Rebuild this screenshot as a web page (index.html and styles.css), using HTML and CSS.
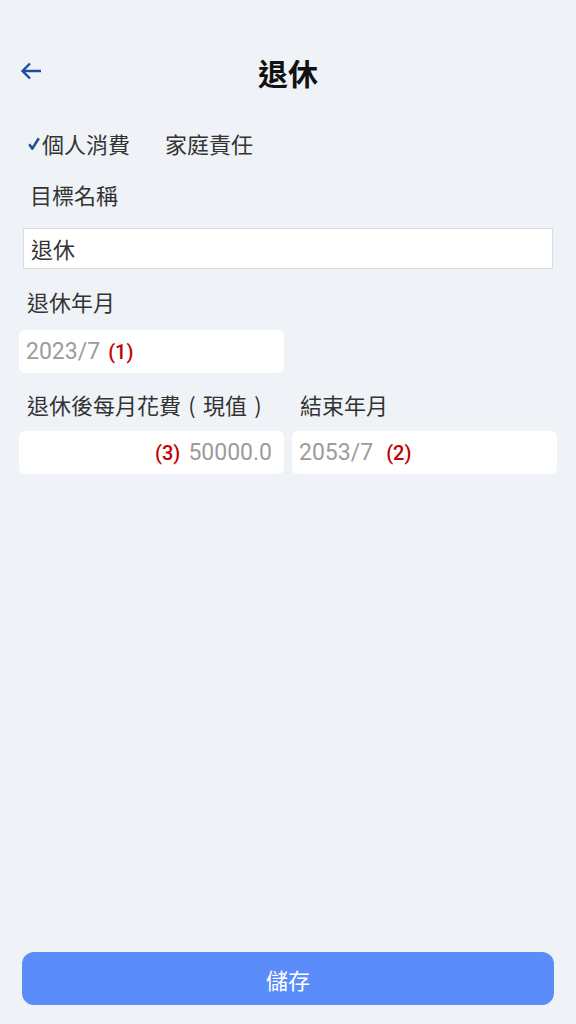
FILE: index.html
```html
<!DOCTYPE html>
<html lang="zh-Hant">
<head>
    <meta charset="UTF-8">
    <title>退休</title>
    <link rel="stylesheet" href="styles.css">
</head>
<body>

	<div class="page">
	    <div class="top_bar">
	        <a class="back_bt" href="">
	            <svg width="22" height="18" viewBox="0 0 22 18">
	                <path d="M21 9H2.5M10 1.5L2.5 9L10 16.5" fill="none" stroke="#1d4d9f" stroke-width="2.4"/>
	            </svg>
	        </a>
	        <div class="title">退休</div>
	        <div></div>
	    </div>

	    <div class="tab_row">
	        <span class="tab tab_on">
	            <svg width="12" height="13" viewBox="0 0 12 13">
	                <path d="M1.2 7.2L4.3 11.6L10.8 1.2" fill="none" stroke="#2b4f93" stroke-width="2.6"/>
	            </svg>個人消費
	        </span>
	        <span class="tab">家庭責任</span>
	    </div>

	    <div class="label label_name">目標名稱</div>
	    <div class="name_input">退休</div>

	    <div class="label label_date">退休年月</div>
	    <div class="grid_row row_date">
	        <div class="box"><span class="num">2023/7</span><span class="mark">(1)</span></div>
	    </div>

	    <div class="grid_row label_row">
	        <div class="label">退休後每月花費<span class="paren">(</span>現值<span class="paren">)</span></div>
	        <div class="label">結束年月</div>
	    </div>
	    <div class="grid_row row_cost">
	        <div class="box box_right"><span class="mark">(3)</span><span class="num">50000.0</span></div>
	        <div class="box"><span class="num">2053/7</span><span class="mark mark_far">(2)</span></div>
	    </div>

	    <button class="save_bt">儲存</button>
	</div>

</body>
</html>
```

FILE: styles.css
```css
*{
    margin: 0;
    padding: 0;
    box-sizing: border-box;
}
body{
    background-color: #eff3f7;
    font-family: "Noto Sans CJK TC", "Noto Sans", sans-serif;
    color: #333;
}
.page{
    display: flex;
    flex-direction: column;
    min-height: 1024px;
}
.top_bar{
    display: grid;
    grid-template-columns: 60px 1fr 60px;
    align-items: center;
    height: 44px;
    margin-top: 50px;
}
.back_bt{
    display: flex;
    align-items: center;
    padding-left: 20px;
    padding-bottom: 2px;
}
.title{
    text-align: center;
    font-size: 30px;
    font-weight: bold;
    color: #111;
    line-height: 44px;
}
.tab_row{
    display: flex;
    gap: 35px;
    margin-top: 33px;
    padding-left: 28px;
    font-size: 22px;
    line-height: 32px;
}
.tab{
    display: flex;
    align-items: center;
}
.tab_on svg{
    margin-right: 2px;
    margin-top: 1px;
}
.label{
    font-size: 22px;
    line-height: 32px;
    padding-left: 27px;
    white-space: nowrap;
}
.paren{
    display: inline-block;
    width: 22px;
    text-align: center;
}
.label_name{
    margin-top: 19px;
    padding-left: 30px;
}
.name_input{
    margin: 18px 23px 0;
    height: 41px;
    background: white;
    border: 1px solid #dadde0;
    padding-left: 7px;
    font-size: 22px;
    line-height: 38px;
}
.label_date{
    margin-top: 16px;
}
.grid_row{
    display: grid;
    grid-template-columns: 1fr 1fr;
    gap: 8px;
    padding: 0 19px;
}
.row_date{
    margin-top: 13px;
}
.label_row{
    margin-top: 15px;
}
.label_row .label{
    padding-left: 8px;
}
.row_cost{
    margin-top: 11px;
}
.box{
    display: flex;
    align-items: center;
    gap: 8px;
    height: 43px;
    background: white;
    border-radius: 6px;
    padding: 0 7px;
}
.box_right{
    justify-content: flex-end;
    padding-right: 12px;
}
.num{
    font-family: Roboto, sans-serif;
    font-size: 23px;
    color: #9c9c9c;
}
.mark{
    font-family: Roboto, sans-serif;
    font-size: 20px;
    font-weight: 500;
    color: #c40000;
}
.mark_far{
    margin-left: 5px;
}
.save_bt{
    margin: auto 22px 19px;
    height: 53px;
    border: none;
    border-radius: 12px;
    background-color: #5a8cfa;
    color: white;
    font-family: inherit;
    font-size: 22px;
}
```
